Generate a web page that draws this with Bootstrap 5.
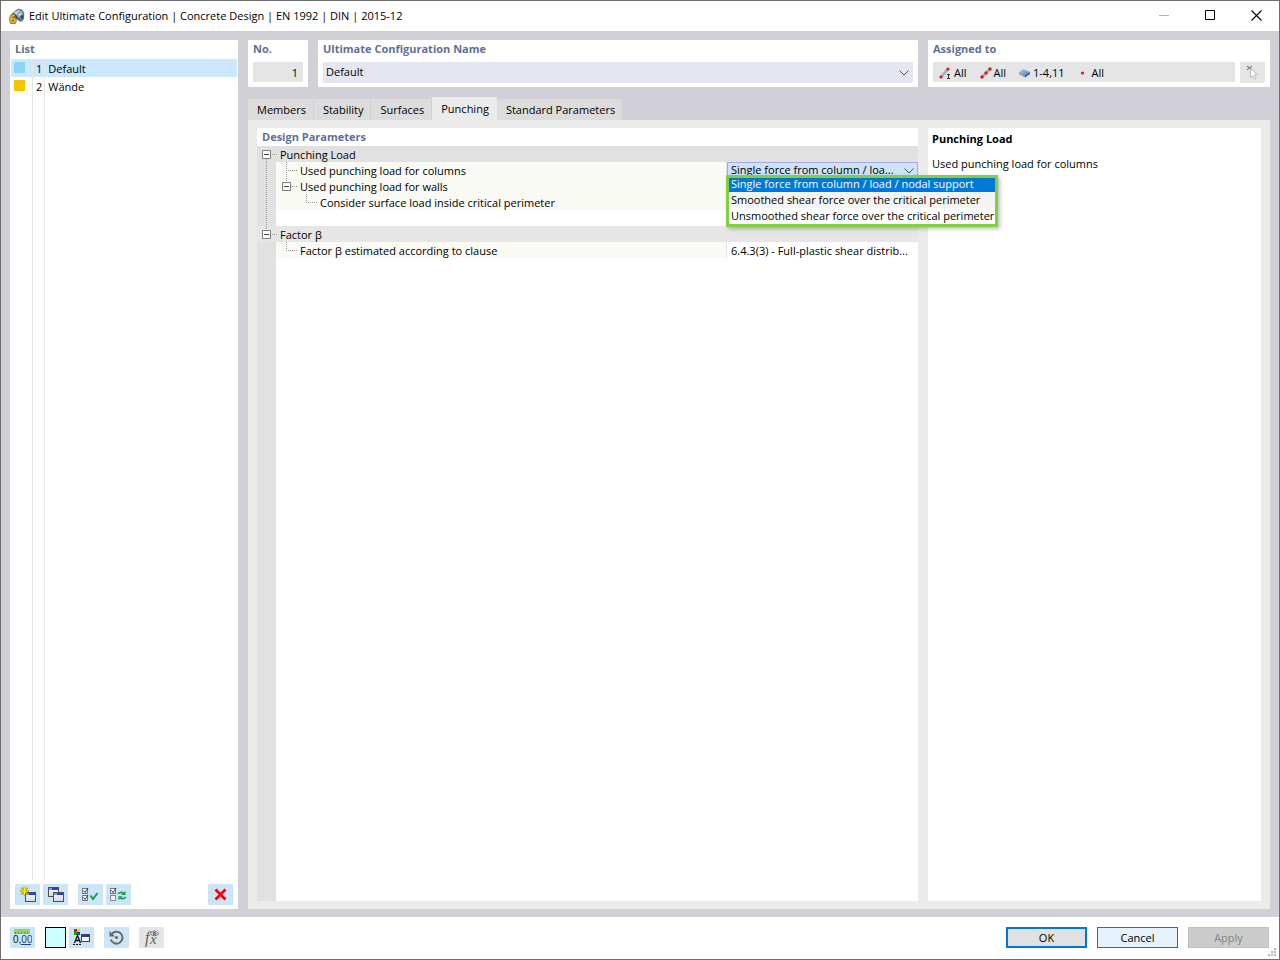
<!DOCTYPE html>
<html lang="en">
<head>
<meta charset="utf-8">
<meta name="viewport" content="width=device-width, initial-scale=1">
<title>Edit Ultimate Configuration</title>
<link href="https://cdn.jsdelivr.net/npm/bootstrap@5.3.0/dist/css/bootstrap.min.css" rel="stylesheet">
<style>
  body { font: 11px/16px "Open Sans", "Noto Sans", sans-serif; color: #000; background: #fff; }
  .win { border: 1px solid #6e6e6e; background: #d0d0d6; }
  .titlebar { height: 30px; padding-left: 8px; }
  .titlebar .winbtn { width: 46px; height: 28px; display: flex; align-items: center; justify-content: center; }
  button { font: inherit; }
  .workarea { padding: 9px 9px 8px; gap: 10px; min-height: 0; }
  .shrinkable { min-width: 0; }
  .gap-wide { gap: 10px; }
  .gap-tight { gap: 3px; }
  .list-panel { width: 228px; }
  .caption-label { color: #5e6f97; font-weight: 700; line-height: 18px; padding-left: 5px; display: block; margin: 0; }
  .list-panel .caption-label { height: 19px; }
  .list-table { margin: 0 1px; width: calc(100% - 2px); border-collapse: separate; border-spacing: 0; height: 100%; }
  .list-table td { padding: 2px 3px 0; height: 18px; line-height: 16px; border-right: 1px solid #e6e6e6; vertical-align: top; }
  .list-table td:nth-child(2) { padding-right: 2px; }
  .list-table td:last-child { border-right: 0; }
  .list-table .chosen { background: #cce8ff; }
  .list-table .filler td { height: auto; }
  .swatch { display: block; width: 11px; height: 11px; margin-top: 1px; }
  .col-swatch { width: 22px; }
  .col-no { width: 12px; }
  .list-tools { padding: 4px 5px; }
  .tool { width: 25px; height: 21px; padding: 0; border: 0; background: #cce4f7; display: flex; align-items: center; justify-content: center; }
  .tool:disabled { background: #e5e5e5; }
  .colorbox { width: 21px; height: 21px; border: 1px solid #000; background: #ccffff; padding: 0; }
  .head-panel { height: 47px; }
  .head-body { padding: 4px 5px 0; gap: 5px; }
  .no-panel { width: 60px; }
  .assigned-panel { width: 342px; }
  .field { height: 20px; border: 0; border-radius: 0; background: #e5e5e5; font: inherit; color: #000; min-width: 0; }
  .field-no { display: block; width: 100%; text-align: right; padding: 1px 5px 0 0; }
  .assigned { padding: 2px 0 0 5px; }
  .assigned span { margin-right: 12px; }
  .combo { appearance: none; border: 0; border-radius: 0; font: inherit; color: #000; display: block; width: 100%; background: no-repeat right 4px center/10px 6px url("data:image/svg+xml,%3Csvg xmlns='http://www.w3.org/2000/svg' viewBox='0 0 10 6'%3E%3Cpath d='M.5.5 5 5 9.5.5' fill='none' stroke='%23505050'/%3E%3C/svg%3E"); }
  .combo-name { height: 21px; background-color: #e6e6f2; padding: 0 20px 1px 3px; }
  .combo-load { height: 16px; border: 1px solid #a8a8e8; border-bottom: 0; background-color: #cce4f7; padding: 0 0 1px 3px; line-height: 14px; background-position: right 3px center; }
  .tabs { margin-top: 10px; }
  .tabs .nav-link { height: 21px; padding: 0 7px 0 9px; color: #000; background: #dcdcdc; border: 0; border-right: 1px solid #d0d0d6; border-radius: 0; line-height: 22px; }
  .tabs .nav-link.active { height: 23px; padding-top: 1px; background: #ebebeb; border-right-color: #ebebeb; color: #000; }
  .tab-area { background: #ebebeb; padding: 8px 9px; gap: 10px; }
  .help-panel { width: 333px; padding: 3px 4px; }
  .help-panel h1 { font-size: 11px; font-weight: 700; line-height: 16px; margin: 0 0 9px; }
  .tree-table { width: 100%; table-layout: fixed; border-collapse: separate; border-spacing: 0; }
  .tree-table td { padding: 0; height: 16px; line-height: 16px; white-space: nowrap; }
  .tree-table svg { display: block; flex: none; overflow: visible; }
  .c-gutter { width: 19px; }
  .c-value { width: 192px; }
  .tree-table .node td { background: #f9faf4; }
  .tree-table .node td.gut, .tree-table .blank td.gut { background: #e1e1e1; }
  .tree-table .node td.val { background: #fff; border-left: 1px solid #e1e1e1; }
  .tree-table .group { background: #e1e1e1; }
  .tree-table .group2 { background: #e6e6e6; }
  .gutter-fill { width: 19px; background: #e1e1e1; }
  .fold { border: 0; padding: 0; background: none; display: block; line-height: 0; }
  .node-label { display: block; height: 16px; line-height: 18px; padding-left: 4px; }
  .popup { top: 13px; left: -1px; z-index: 5; border: 3px solid #82d03c; background: #fff; box-shadow: 2px 2px 4px rgba(0,0,0,.25); margin: 0; }
  .popup li { height: 16px; line-height: 16px; padding: 0 1px 0 2px; white-space: nowrap; }
  .popup li:nth-child(2) { background: #f4f4f4; }
  .popup .picked { height: 14px; line-height: 12px; background: #0078d7; color: #fff; }
  .footer-bar { height: 42px; padding: 0 10px 1px 9px; }
  .dlg { width: 81px; height: 21px; padding: 0; border-radius: 0; font-size: 11px; line-height: 16px; color: #000; border: 1px solid #0078d7; background: #e5f1fb; }
  .dlg-ok { border-width: 2px; background: #e1e1e1; }
  .dlg:disabled { background: #ccc; border-color: #bfbfbf; color: #838383; opacity: 1; }
  .grip { right: 2px; bottom: 2px; }
</style>
</head>
<body>
<svg class="position-absolute" width="0" height="0" aria-hidden="true">
  <defs>
    <symbol id="t-minus" viewBox="0 0 19 16"><path d="M5.500 4.500h8v8h-8z" fill="#fff" stroke="#808080"/><path d="M7 8.500h5" stroke="#404040"/></symbol>
    <linearGradient id="winfill" x1="0" y1="0" x2="0" y2="1"><stop offset="0" stop-color="#fff"/><stop offset="1" stop-color="#d4d4dc"/></linearGradient>
    <linearGradient id="slab" x1="0" y1="0" x2="1" y2="1"><stop offset="0" stop-color="#a8cdea"/><stop offset="1" stop-color="#4d83b3"/></linearGradient>
    <g id="miniwin"><rect x=".5" y=".5" width="10" height="9" fill="url(#winfill)" stroke="#505050"/><path d="M1 2h3" stroke="#7f92ee" stroke-width="2"/><path d="M4 2h6" stroke="#1c3fe0" stroke-width="2"/></g>
    <g id="ticked"><rect x=".5" y=".5" width="5" height="5" fill="#fff" stroke="#777"/><path d="M1.500 2.500 3 4.500 6 0" fill="none" stroke="#333"/></g>
  </defs>
</svg>
<div class="win vh-100 d-flex flex-column position-relative overflow-hidden">
  <header class="titlebar bg-white d-flex align-items-start flex-shrink-0">
    <svg class="align-self-center" width="16" height="16" viewBox="0 0 16 16" aria-hidden="true">
      <path d="M3 5 9 .8l4 .7 2.300 3.500-.3 6-3 3-5-3-4-3z" fill="#5b7194"/><path d="M4 5 9 2l3 1-4 3zM9 6l4-2 1 2-4 2z" fill="#b4c5dc"/><path d="M9 9.500 14 7v3l-3 3zM6 7l2-.5 1 3-2 .5z" fill="#33455f"/>
      <path d="M10 2 7 6l3 4M13 3l-3 4 2 5M5 4l7 4" fill="none" stroke="#dce6f2" stroke-width=".7"/>
      <path d="M5.500 7.600H3.500Q2 8 2 11v1.500Q2 14.600 4 14.600T6 12.500 4 10.700 2 12" fill="none" stroke="#8a6508" stroke-width="3.400"/><path d="M5.500 7.600H3.500Q2 8 2 11v1.500Q2 14.600 4 14.600T6 12.500 4 10.700 2 12" fill="none" stroke="#e3b735" stroke-width="1.800"/>
    </svg>
    <span class="flex-fill ps-1 align-self-center">Edit Ultimate Configuration | Concrete Design | EN 1992 | DIN | 2015-12</span>
    <button class="winbtn btn p-0 border-0" disabled aria-label="Minimize"><svg width="10" height="10"><path d="M0 5.500h10" stroke="#888"/></svg></button>
    <button class="winbtn btn p-0 border-0" aria-label="Maximize"><svg width="10" height="10"><path d="M.5.500h9v9h-9z" fill="none" stroke="#000"/></svg></button>
    <button class="winbtn btn p-0 border-0" aria-label="Close"><svg width="11" height="11"><path d="m.5.500 10 10m0-10-10 10" stroke="#000" stroke-width="1.100"/></svg></button>
  </header>

  <main class="workarea d-flex flex-fill">
    <aside class="list-panel bg-white d-flex flex-column flex-shrink-0">
      <span class="caption-label">List</span>
      <div class="flex-fill">
        <table class="list-table">
          <colgroup><col class="col-swatch"><col class="col-no"><col></colgroup>
          <tbody>
            <tr class="chosen"><td><span class="swatch" style="background:#8ed5f5"></span></td><td>1</td><td>Default</td></tr>
            <tr><td><span class="swatch" style="background:#f5c200"></span></td><td>2</td><td>Wände</td></tr>
            <tr class="filler"><td></td><td></td><td></td></tr>
          </tbody>
        </table>
      </div>
      <div class="list-tools d-flex gap-wide">
        <div class="d-flex gap-tight">
          <button class="tool" aria-label="New"><svg width="18" height="17" viewBox="0 0 18 17"><use href="#miniwin" x="6" y="6"/><path d="M5.500.500v9M1 5h9M2.300 1.800l6.400 6.400M8.700 1.800 2.300 8.200" stroke="#8c8420" stroke-width="1.600"/><path d="M5.500 1v8M1.500 5h8M2.800 2.300l5.400 5.400M8.200 2.300 2.800 7.700" stroke="#fff200"/></svg></button>
          <button class="tool" aria-label="Copy"><svg width="18" height="17" viewBox="0 0 18 17"><use href="#miniwin" x="1" y="1"/><use href="#miniwin" x="6" y="6"/></svg></button>
        </div>
        <div class="d-flex gap-tight">
          <button class="tool" aria-label="Check all"><svg width="17" height="17" viewBox="0 0 17 17"><use href="#ticked" y="2"/><use href="#ticked" y="9"/><path d="m8.500 9.500 2.500 3.500L15.500 7" fill="none" stroke="#12a34a" stroke-width="2"/></svg></button>
          <button class="tool" aria-label="Invert checks"><svg width="17" height="17" viewBox="0 0 17 17"><use href="#ticked" y="2"/><rect x=".5" y="9.500" width="5" height="5" fill="#e6f1fa" stroke="#888"/><path d="M8 8q2.500-3 6-.5M16 11q-3 3-6 .8" fill="none" stroke="#12a34a" stroke-width="1.600"/><path d="M15.500 5v4h-4.500zM8.500 10v4l4.500-3.500z" fill="#12a34a"/></svg></button>
        </div>
        <button class="tool ms-auto" aria-label="Delete"><svg width="13" height="13" viewBox="0 0 13 13"><path d="m1.500 1.500 10 10m0-10-10 10" stroke="#f00" stroke-width="2.800"/></svg></button>
      </div>
    </aside>

    <section class="shrinkable flex-fill d-flex flex-column">
      <div class="d-flex gap-wide">
        <div class="head-panel no-panel bg-white flex-shrink-0">
          <label class="caption-label" for="no">No.</label>
          <div class="head-body"><input id="no" class="field field-no" value="1" readonly></div>
        </div>
        <div class="head-panel bg-white flex-fill">
          <label class="caption-label" for="cfg">Ultimate Configuration Name</label>
          <div class="head-body"><select id="cfg" class="combo combo-name"><option>Default</option></select></div>
        </div>
        <div class="head-panel assigned-panel bg-white flex-shrink-0">
          <span class="caption-label">Assigned to</span>
          <div class="head-body d-flex">
            <div class="field assigned flex-fill d-flex align-items-center">
              <svg width="16" height="14" viewBox="0 0 16 14"><path d="m3 11 7-8" stroke="#9db4cc" stroke-width="3"/><circle cx="3" cy="11" r="1.600" fill="#e01818"/><circle cx="10" cy="3" r="1.600" fill="#e01818"/><path d="M9 8.500h3m-1.500 0v4m-1.500 0h3" stroke="#333" fill="none"/></svg><span>All</span>
              <svg width="15" height="14" viewBox="0 0 15 14"><path d="m3 11 8-8" stroke="#9db4cc" stroke-width="3"/><circle cx="3" cy="11" r="1.700" fill="#e01818"/><circle cx="7" cy="7" r="1.700" fill="#e01818"/><circle cx="11" cy="3" r="1.700" fill="#e01818"/></svg><span>All</span>
              <svg width="15" height="14" viewBox="0 0 15 14"><path d="M1 6.500 5 3l7 3-5 4z" fill="url(#slab)"/><path d="m1 6.500 6 3v2L1 8z" fill="#719cc4"/><path d="m7 9.500 5-3.500v2l-5 3.500z" fill="#345e85"/></svg><span>1-4,11</span>
              <svg width="15" height="14" viewBox="0 0 15 14"><circle cx="5.500" cy="7" r="1.600" fill="#e01818"/></svg><span>All</span>
            </div>
            <button class="tool" disabled aria-label="Select objects"><svg width="15" height="17" viewBox="0 0 15 17"><path d="m2 2 5 4m0-4L2 6" stroke="#888" stroke-width="1.300"/><path d="M5.500 4.500v9l2.300-2 1.700 3.500 1.700-1-1.500-3.300h2.800z" fill="#fff" stroke="#bbb"/></svg></button>
          </div>
        </div>
      </div>

      <div class="tabs nav align-items-end flex-nowrap" role="tablist">
        <button class="nav-link" role="tab">Members</button>
        <button class="nav-link" role="tab">Stability</button>
        <button class="nav-link" role="tab">Surfaces</button>
        <button class="nav-link active" role="tab" aria-selected="true">Punching</button>
        <button class="nav-link" role="tab">Standard Parameters</button>
      </div>

      <div class="tab-area d-flex flex-fill">
        <div class="shrinkable bg-white flex-fill d-flex flex-column">
          <span class="caption-label">Design Parameters</span>
          <table class="tree-table">
            <colgroup><col class="c-gutter"><col><col class="c-value"></colgroup>
            <tbody>
              <tr class="group"><td><button class="fold" aria-label="Collapse Punching Load"><svg width="19" height="16"><use href="#t-minus"/><path d="M15 8.500h6M9.500 13v3" stroke="#999" stroke-dasharray="1 1"/></svg></button></td><td colspan="2"><span class="node-label">Punching Load</span></td></tr>
              <tr class="node"><td class="gut"><svg width="19" height="16"><path d="M9.500 0v16" stroke="#999" stroke-dasharray="1 1"/></svg></td>
                <td><div class="d-flex"><svg width="20" height="16"><path d="M10.500 0v16M12 8.500h9" stroke="#999" stroke-dasharray="1 1"/></svg><label class="node-label" for="load">Used punching load for columns</label></div></td>
                <td class="val position-relative">
                  <select id="load" class="combo combo-load"><option>Single force from column / loa...</option></select>
                  <ul class="popup list-unstyled position-absolute" role="listbox" aria-label="Punching load options">
                    <li class="picked" role="option" aria-selected="true">Single force from column / load / nodal support</li>
                    <li role="option">Smoothed shear force over the critical perimeter</li>
                    <li role="option">Unsmoothed shear force over the critical perimeter</li>
                  </ul>
                </td></tr>
              <tr class="node"><td class="gut"><svg width="19" height="16"><path d="M9.500 0v16" stroke="#999" stroke-dasharray="1 1"/></svg></td>
                <td><div class="d-flex"><button class="fold" aria-label="Collapse walls"><svg width="20" height="16"><use href="#t-minus" x="1" width="19" height="16"/><path d="M10.500 0v4M16 8.500h5" stroke="#999" stroke-dasharray="1 1"/></svg></button><span class="node-label">Used punching load for walls</span></div></td><td class="val"></td></tr>
              <tr class="node"><td class="gut"><svg width="19" height="16"><path d="M9.500 0v16" stroke="#999" stroke-dasharray="1 1"/></svg></td>
                <td><div class="d-flex"><svg width="40" height="16"><path d="M30.500 0v9M32 8.500h9" stroke="#999" stroke-dasharray="1 1"/></svg><span class="node-label">Consider surface load inside critical perimeter</span></div></td><td class="val"></td></tr>
              <tr class="blank"><td class="gut"><svg width="19" height="16"><path d="M9.500 0v16" stroke="#999" stroke-dasharray="1 1"/></svg></td><td colspan="2"></td></tr>
              <tr class="group2"><td><button class="fold" aria-label="Collapse Factor β"><svg width="19" height="16"><use href="#t-minus"/><path d="M15 8.500h6M9.500 0v4" stroke="#999" stroke-dasharray="1 1"/></svg></button></td><td colspan="2"><span class="node-label">Factor β</span></td></tr>
              <tr class="node"><td class="gut"></td>
                <td><div class="d-flex"><svg width="20" height="16"><path d="M10.500 0v9M12 8.500h9" stroke="#999" stroke-dasharray="1 1"/></svg><span class="node-label">Factor β estimated according to clause</span></div></td>
                <td class="val"><span class="node-label">6.4.3(3) - Full-plastic shear distrib...</span></td></tr>
            </tbody>
          </table>
          <div class="gutter-fill flex-fill"></div>
        </div>
        <div class="help-panel bg-white flex-shrink-0">
          <h1>Punching Load</h1>
          <p class="mb-0">Used punching load for columns</p>
        </div>
      </div>
    </section>
  </main>

  <footer class="footer-bar bg-white d-flex align-items-center gap-wide flex-shrink-0">
    <button class="tool" aria-label="Units and decimal places"><svg width="19" height="17" viewBox="0 0 19 17"><rect x="1" y="0" width="16" height="5" fill="#8fd16f"/><path d="M2.500 3v2m3-2v2m3-2v2m3-2v2m3-2v2" stroke="#4b9b33"/><text x="0" y="14" font-size="10" font-family="Liberation Sans" fill="#111">0,<tspan fill="#1f3f86">00</tspan></text><path d="M8 15.500h10" stroke="#1f3f86"/></svg></button>
    <div class="d-flex gap-tight">
      <button class="colorbox" aria-label="Colour"></button>
      <button class="tool" aria-label="Display properties"><svg width="18" height="17" viewBox="0 0 18 17"><path d="M1 0h3v3H1z" fill="#e11"/><path d="M4 0h3v3H4z" fill="#fc0"/><path d="M1 3h3v3H1z" fill="#1a1"/><path d="M4 3h3v3H4z" fill="#23e"/><path d="m1.500 14 3-7.500 3 7.500m-5-2.500h4" fill="none" stroke="#111" stroke-width="1.300"/><path d="M0 15.500h9" stroke="#111" stroke-dasharray="2 1"/><rect x="8.500" y="5.500" width="8" height="7" fill="#fff" stroke="#444"/><path d="M9 7h7" stroke="#2540a8" stroke-width="2"/></svg></button>
    </div>
    <button class="tool" aria-label="Reset"><svg width="17" height="17" viewBox="0 0 17 17"><path d="M3.400 5.500a6 6 0 1 1-.6 5" fill="none" stroke="#686868" stroke-width="2"/><path d="M1.500 2v5.500H7z" fill="#686868"/><circle cx="8.500" cy="8.500" r="1.600" fill="#686868"/></svg></button>
    <button class="tool" disabled aria-label="Formula"><svg width="19" height="18" viewBox="0 0 19 18"><text x="3" y="14" font-family="Liberation Serif" font-size="16" font-style="italic" fill="#606060">f</text><text x="8" y="15" font-family="Liberation Serif" font-size="15" font-style="italic" fill="#606060">x</text><path d="M8 4.500q4.500-5 9 0-4.500 4.500-9 0z" fill="#e5e5e5" stroke="#777"/><circle cx="12.500" cy="4.500" r="1.800" fill="#777"/></svg></button>
    <div class="ms-auto d-flex gap-wide">
      <button class="dlg dlg-ok">OK</button>
      <button class="dlg">Cancel</button>
      <button class="dlg" disabled>Apply</button>
    </div>
  </footer>
  <svg class="grip position-absolute" width="9" height="9" aria-hidden="true"><path d="M6 0h2v2H6zM3 3h2v2H3zM6 3h2v2H6zM0 6h2v2H0zM3 6h2v2H3zM6 6h2v2H6z" fill="#b8b8b8"/></svg>
</div>
<script src="https://cdn.jsdelivr.net/npm/bootstrap@5.3.0/dist/js/bootstrap.bundle.min.js"></script>
</body>
</html>
